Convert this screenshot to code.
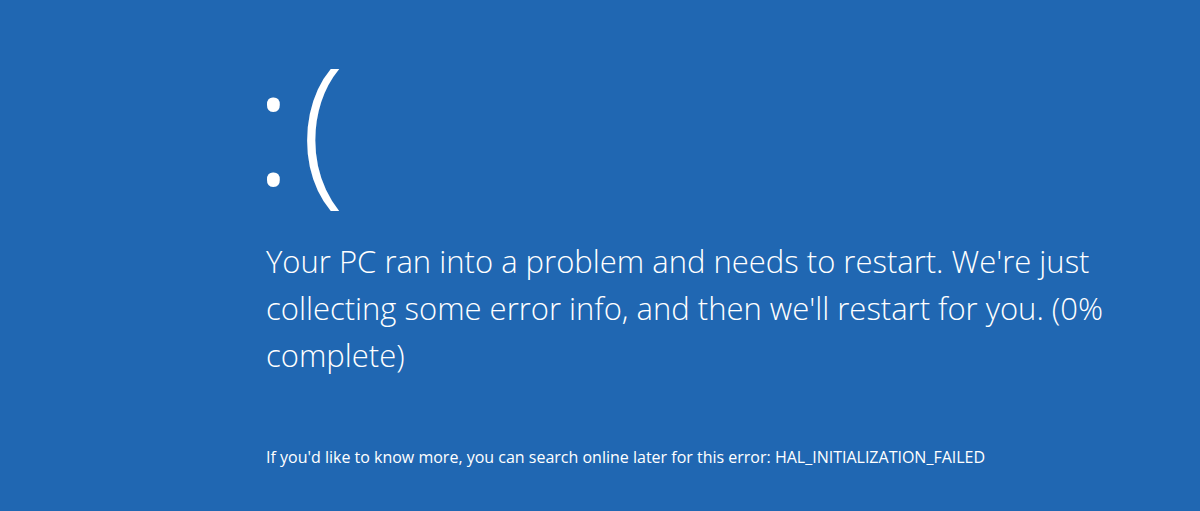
export default function App() {
  return (
    <div
      className="h-[511px] w-[1200px] overflow-hidden bg-[#2067b2] pl-[266px] text-white"
      style={{ fontFamily: '"Open Sans", "Noto Sans", sans-serif' }}
    >
      <div className="pt-[22px] text-[162px] font-light leading-[200px]">
        <span className="-ml-[12px] mr-[8px]">:</span>(
      </div>
      <p className="mt-[16px] w-[880px] text-[31px] font-light leading-[47px]">
        Your PC ran into a problem and needs to restart. We're just collecting some error info, and then
        we'll restart for you. (0% complete)
      </p>
      <p className="mt-[68px] text-[16px] font-normal leading-[20px]">
        If you'd like to know more, you can search online later for this error: HAL_INITIALIZATION_FAILED
      </p>
    </div>
  );
}
